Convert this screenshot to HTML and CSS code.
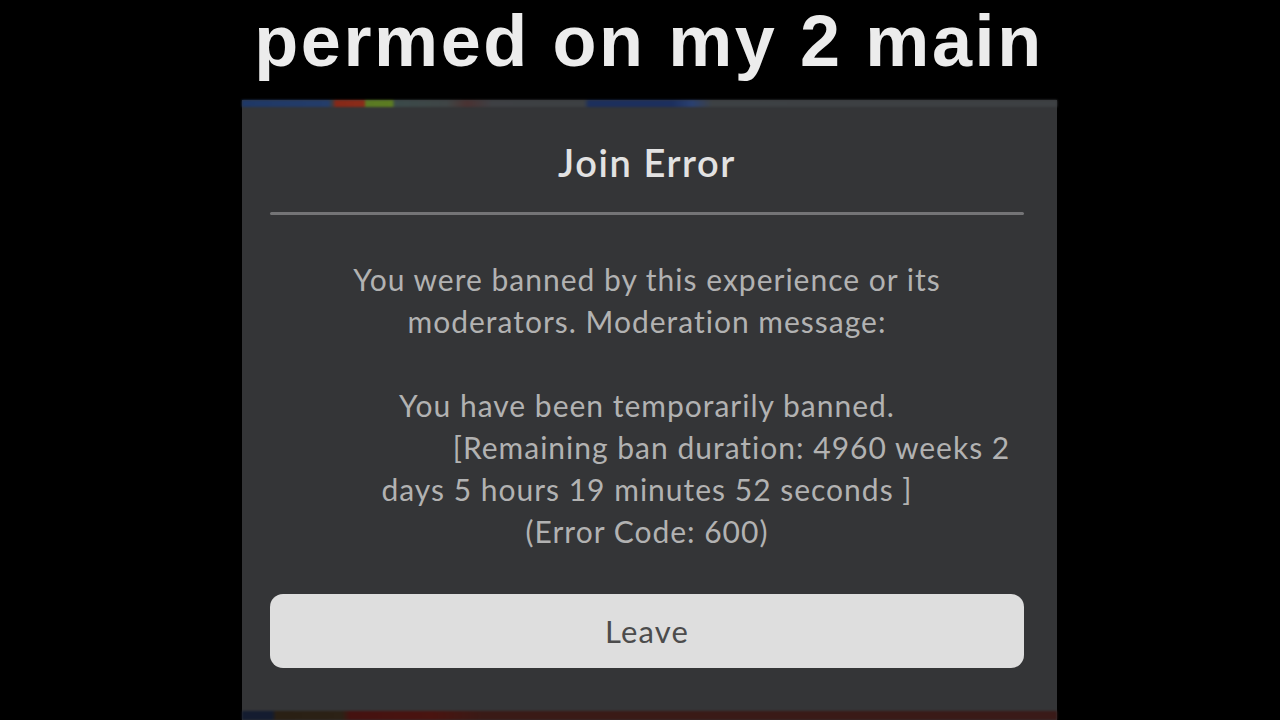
FILE: index.html
```html
<!DOCTYPE html>
<html lang="en">
<head>
  <meta charset="UTF-8">
  <meta name="viewport" content="width=device-width, initial-scale=1.0">
  <title>permed on my 2 main</title>
  <link rel="stylesheet" href="styles.css">
</head>
<body>

  <!-- Caption au-dessus de la capture -->
  <h1 class="caption">permed on my 2 main</h1>

  <!-- Fenêtre d'erreur -->
  <div class="screen">
    <div class="game-strip top"></div>

    <div class="dialog">
      <h2 class="dialog-title">Join Error</h2>
      <div class="divider"></div>

      <div class="message">
        <div>You were banned by this experience or its</div>
        <div>moderators. Moderation message:</div>
        <div class="blank"></div>
        <div>You have been temporarily banned.</div>
        <div class="indent">[Remaining ban duration: 4960 weeks 2</div>
        <div>days 5 hours 19 minutes 52 seconds ]</div>
        <div>(Error Code: 600)</div>
      </div>

      <button class="leave-btn">Leave</button>
    </div>

    <div class="game-strip bottom"></div>
  </div>

</body>
</html>
```

FILE: styles.css
```css
body {
  margin: 0;
  background-color: #000;
  height: 720px;
  overflow: hidden;
  display: flex;
  flex-direction: column;
  align-items: center;
}
.caption {
  margin: 0;
  height: 100px;
  font-family: "Liberation Sans", Arial, sans-serif;
  font-weight: bold;
  font-size: 72px;
  line-height: 82px;
  color: #ececec;
  letter-spacing: 2.6px;
  padding-left: 18px;
}
.screen {
  width: 815px;
  height: 620px;
  margin-left: 19px;
  background-color: #343537;
  display: flex;
  flex-direction: column;
}
.game-strip {
  filter: blur(1px);
}
.game-strip.top {
  height: 7px;
  background: linear-gradient(90deg,
    #1f3866 0px, #243d6a 86px, #3a3d44 90px,
    #862818 94px, #8a2c1a 122px, #5a7a24 124px, #5c7c22 150px,
    #3b4a4a 153px, #3f4546 205px, #4a3232 225px, #3e4044 250px,
    #3d4043 342px, #1c2f5c 347px, #1c2f5e 430px, #2a4070 450px,
    #3d4144 470px, #3d4043 815px);
}
.game-strip.bottom {
  height: 9px;
  margin-top: auto;
  background: linear-gradient(90deg,
    #141c30 0px, #141c30 30px, #2a2014 34px, #2c2216 100px,
    #451210 108px, #4a1410 190px, #3a1a16 240px, #3a1a18 815px);
}
.dialog {
  padding: 30px 33px 0 28px;
  display: flex;
  flex-direction: column;
  align-items: center;
  font-family: Lato, "Open Sans", sans-serif;
}
.dialog-title {
  margin: 0;
  height: 50px;
  line-height: 50px;
  font-size: 38px;
  font-weight: 600;
  letter-spacing: 1.6px;
  color: #e2e2e2;
}
.divider {
  width: 100%;
  height: 3px;
  margin-top: 25px;
  background-color: #747476;
  border-radius: 2px;
}
.message {
  margin-top: 43px;
  font-size: 30px;
  line-height: 42px;
  letter-spacing: 1px;
  color: #b2b2b2;
  text-align: center;
}
.message .blank {
  height: 42px;
}
.message .indent {
  padding-left: 169px;
}
.leave-btn {
  margin-top: 42px;
  width: 100%;
  height: 74px;
  border: none;
  border-radius: 13px;
  background-color: #dedede;
  color: #4c4c4c;
  font-family: Lato, "Open Sans", sans-serif;
  font-size: 31px;
  letter-spacing: 1.2px;
  cursor: pointer;
}
```
